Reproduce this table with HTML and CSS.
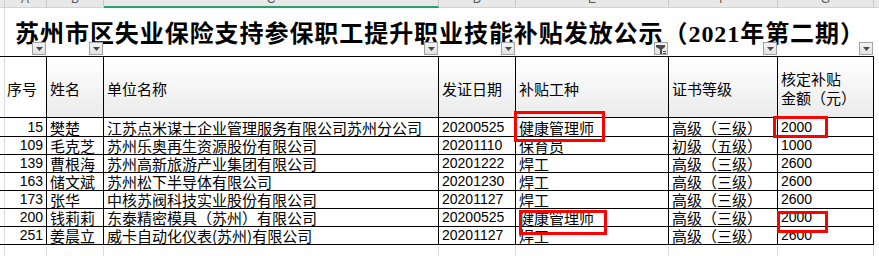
FILE: index.html
```html
<!DOCTYPE html>
<html lang="zh-CN">
<head>
<meta charset="utf-8">
<title>苏州市区失业保险支持参保职工提升职业技能补贴发放公示</title>
<link rel="stylesheet" href="styles.css">
</head>
<body>
<div class="sheet">
  <div class="strip">
    <div class="sc sa"><span>A</span></div>
    <div class="sc"><span>B</span></div>
    <div class="sc sel"><span>C</span></div>
    <div class="sc"><span>D</span></div>
    <div class="sc"><span>E</span></div>
    <div class="sc"><span>F</span></div>
    <div class="sc"><span>G</span></div>
    <div class="sc rest"></div>
  </div>

  <div class="grid">
    <div class="title">苏州市区失业保险支持参保职工提升职业技能补贴发放公示（<span class="dg">2021</span>年第二期）</div>
    <div class="fb k1"><span class="btn"><svg width="7" height="4" viewBox="0 0 7 4"><path d="M0 0H7L3.5 4Z"/></svg></span></div>
    <div class="fb k2"><span class="btn"><svg width="7" height="4" viewBox="0 0 7 4"><path d="M0 0H7L3.5 4Z"/></svg></span></div>
    <div class="fb k3"><span class="btn"><svg width="7" height="4" viewBox="0 0 7 4"><path d="M0 0H7L3.5 4Z"/></svg></span></div>
    <div class="fb k4"><span class="btn"><svg width="7" height="4" viewBox="0 0 7 4"><path d="M0 0H7L3.5 4Z"/></svg></span></div>
    <div class="fb k5"><span class="btn"><svg width="12" height="11" viewBox="0 0 12 11"><path d="M1 1H10V3L7 5.5V10H5V5.5L1 3Z"/><rect x="8" y="7" width="3" height="1"/><rect x="8" y="9" width="3" height="1"/></svg></span></div>
    <div class="fb k6"><span class="btn"><svg width="7" height="4" viewBox="0 0 7 4"><path d="M0 0H7L3.5 4Z"/></svg></span></div>
    <div class="fb k7"><span class="btn"><svg width="7" height="4" viewBox="0 0 7 4"><path d="M0 0H7L3.5 4Z"/></svg></span></div>

    <div class="h ga ha">序号</div>
    <div class="h">姓名</div>
    <div class="h">单位名称</div>
    <div class="h">发证日期</div>
    <div class="h">补贴工种</div>
    <div class="h">证书等级</div>
    <div class="h">核定补贴<br>金额（元）</div>

    <div class="c ga n">15</div><div class="c">樊楚</div><div class="c">江苏点米谋士企业管理服务有限公司苏州分公司</div><div class="c d">20200525</div><div class="c">健康管理师</div><div class="c">高级（三级）</div><div class="c d">2000</div>
    <div class="c ga n">109</div><div class="c">毛克芝</div><div class="c">苏州乐奥再生资源股份有限公司</div><div class="c d">20201110</div><div class="c">保育员</div><div class="c">初级（五级）</div><div class="c d">1000</div>
    <div class="c ga n">139</div><div class="c">曹根海</div><div class="c">苏州高新旅游产业集团有限公司</div><div class="c d">20201222</div><div class="c">焊工</div><div class="c">高级（三级）</div><div class="c d">2600</div>
    <div class="c ga n">163</div><div class="c">储文斌</div><div class="c">苏州松下半导体有限公司</div><div class="c d">20201230</div><div class="c">焊工</div><div class="c">高级（三级）</div><div class="c d">2600</div>
    <div class="c ga n">173</div><div class="c">张华</div><div class="c">中核苏阀科技实业股份有限公司</div><div class="c d">20201127</div><div class="c">焊工</div><div class="c">高级（三级）</div><div class="c d">2600</div>
    <div class="c ga n">200</div><div class="c">钱莉莉</div><div class="c">东泰精密模具（苏州）有限公司</div><div class="c d">20200525</div><div class="c">健康管理师</div><div class="c">高级（三级）</div><div class="c d">2000</div>
    <div class="c ga n">251</div><div class="c">姜晨立</div><div class="c">威卡自动化仪表(苏州)有限公司</div><div class="c d">20201127</div><div class="c">焊工</div><div class="c">高级（三级）</div><div class="c d">2600</div>

    <div class="f ga"></div><div class="f"></div><div class="f"></div><div class="f"></div><div class="f"></div><div class="f"></div><div class="f"></div>
  </div>

  <div class="mark m1"></div>
  <div class="mark m2"></div>
  <div class="mark m3"></div>
  <div class="mark m4"></div>
</div>
</body>
</html>
```

FILE: styles.css
```css
html, body {
  margin: 0;
  padding: 0;
  background: #ffffff;
}

.sheet {
  position: relative;
  width: 879px;
  height: 256px;
  overflow: hidden;
  background: #ffffff;
  font-family: "Noto Sans CJK SC", sans-serif;
  color: #000000;
}

/* column header strip */
.strip {
  display: grid;
  grid-template-columns: 47px 57px 335px 77px 153px 109px 96px 1fr;
  height: 8px;
  background: #e8e8e8;
  overflow: hidden;
}

.sc {
  box-sizing: border-box;
  height: 8px;
  border-right: 1px solid #c9c9c9;
  border-bottom: 1px solid #d2d2d2;
  display: flex;
  justify-content: center;
  overflow: hidden;
  font-family: "Liberation Sans", sans-serif;
  font-size: 12px;
  line-height: 12px;
  color: #5a5a5a;
}

.sc span {
  display: block;
  margin-top: -7px;
}

.sa {
  padding-left: 4px;
  background-image: linear-gradient(to right, transparent 4px, #cfcfcf 4px, #cfcfcf 5px, transparent 5px);
}

.sel {
  border-bottom: 2px solid #21a36a;
}

.rest {
  border-right: none;
}

/* sheet grid */
.grid {
  display: grid;
  width: 874px;
  grid-template-columns: 47px 57px 335px 77px 153px 109px 96px;
  grid-template-rows: 49px 61px 19px repeat(6, 18px) 18px;
}

.title {
  grid-column: 1 / -1;
  grid-row: 1;
  box-sizing: border-box;
  border-bottom: 1px solid #000000;
  display: flex;
  align-items: center;
  justify-content: center;
  padding: 4px 0 0 6px;
  font-family: "Liberation Serif", "Noto Sans CJK SC", serif;
  font-weight: 700;
  font-size: 24px;
  line-height: 30px;
  letter-spacing: 0.94px;
  white-space: nowrap;
  background-image: linear-gradient(to right, transparent 4px, #d8d8d8 4px, #d8d8d8 5px, transparent 5px);
}

.dg {
  font-family: "Liberation Serif", serif;
}

.fb {
  grid-row: 1;
  display: flex;
  justify-content: flex-end;
  align-items: flex-end;
  padding: 0 1px 2px 0;
}

.k1 { grid-column: 1; }
.k2 { grid-column: 2; }
.k3 { grid-column: 3; }
.k4 { grid-column: 4; }
.k5 { grid-column: 5; }
.k6 { grid-column: 6; }
.k7 { grid-column: 7; }

.btn {
  box-sizing: border-box;
  width: 14px;
  height: 13px;
  border: 1px solid #a3a3a3;
  background: linear-gradient(#f4f4f4, #e2e2e2);
  display: flex;
  align-items: center;
  justify-content: center;
  padding-top: 1px;
}

.btn svg {
  display: block;
  fill: #4a4a4a;
}

/* header row */
.h {
  box-sizing: border-box;
  border-right: 1px solid #000000;
  border-bottom: 1px solid #000000;
  background: linear-gradient(#ffffff, #ebebeb);
  display: flex;
  align-items: center;
  padding: 2px 3px 0 3px;
  font-size: 15px;
  line-height: 19px;
  white-space: nowrap;
}

.ha {
  padding-left: 7px;
  background: linear-gradient(to right, transparent 4px, #d8d8d8 4px, #d8d8d8 5px, transparent 5px),
              linear-gradient(#ffffff, #ebebeb);
}

/* data cells */
.c {
  box-sizing: border-box;
  border-right: 1px solid #000000;
  border-bottom: 1px solid #000000;
  display: flex;
  align-items: center;
  padding: 0 3px;
  font-size: 15px;
  line-height: 17px;
  white-space: nowrap;
  overflow: hidden;
}

.ga {
  background-image: linear-gradient(to right, transparent 4px, #d8d8d8 4px, #d8d8d8 5px, transparent 5px);
}

.n {
  justify-content: flex-end;
  font-family: "Liberation Sans", sans-serif;
  font-size: 14px;
}

.d {
  font-family: "Liberation Sans", sans-serif;
  font-size: 14px;
}

.f {
  box-sizing: border-box;
  border-right: 1px solid #dadada;
  border-bottom: 1px solid #dadada;
}

/* red annotation boxes */
.mark {
  position: absolute;
  box-sizing: border-box;
  border: 3px solid #ff0000;
}

.m1 { left: 514px; top: 111px; width: 91px; height: 31px; }
.m2 { left: 773px; top: 116px; width: 55px; height: 22px; }
.m3 { left: 519px; top: 210px; width: 88px; height: 25px; }
.m4 { left: 777px; top: 211px; width: 51px; height: 22px; }
```
